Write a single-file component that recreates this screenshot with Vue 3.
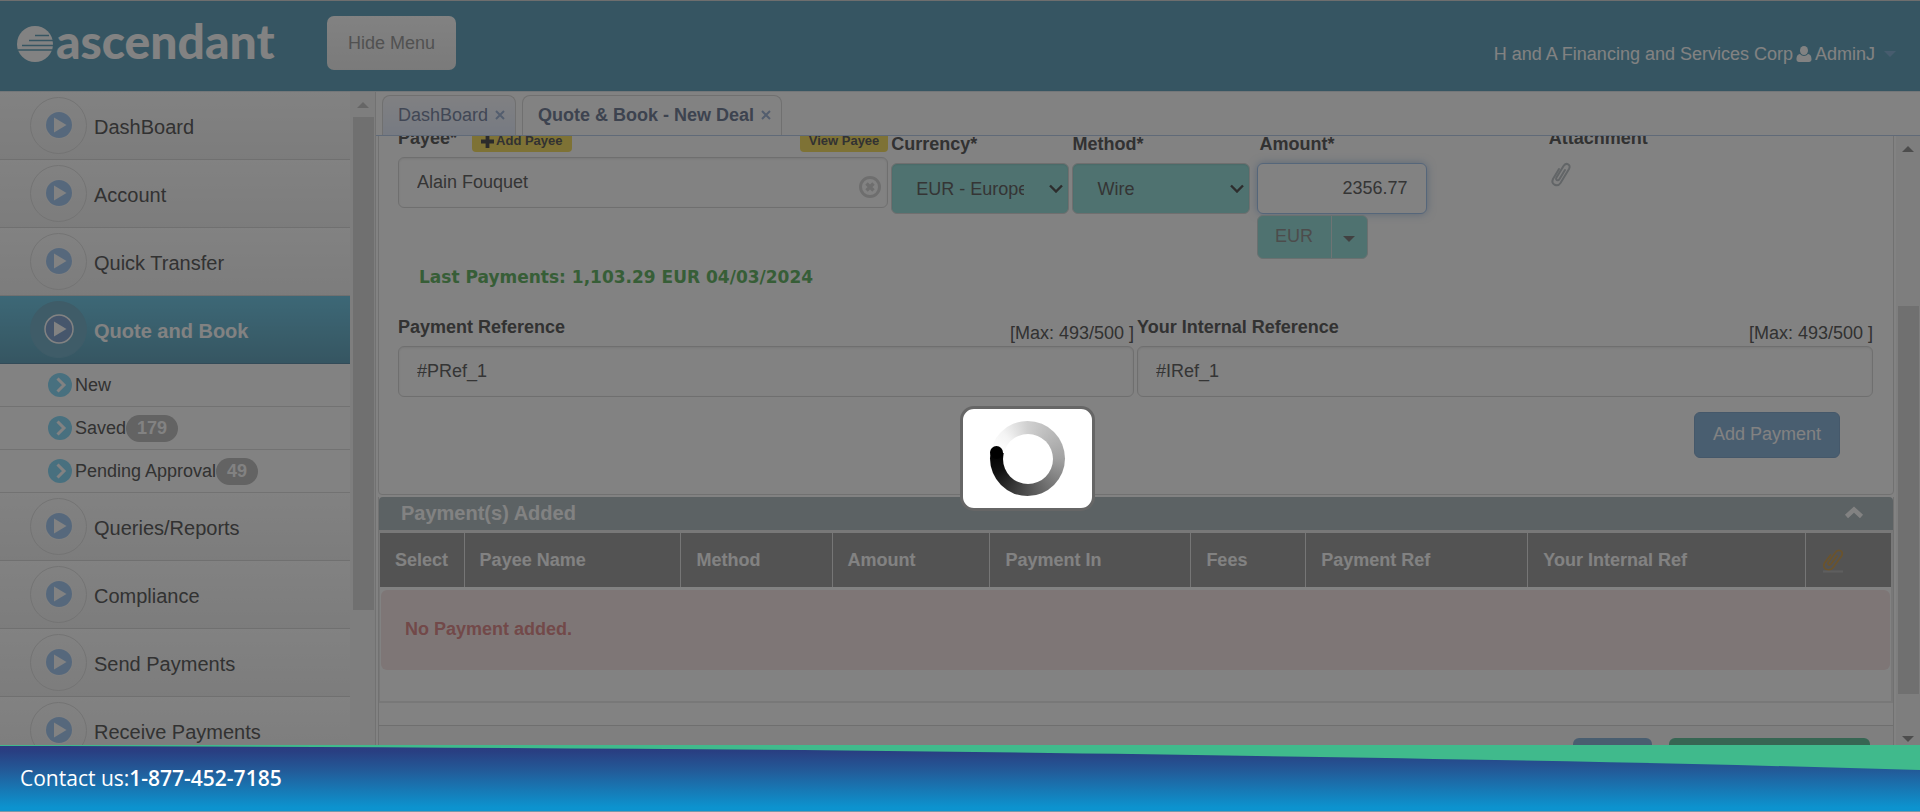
<script setup>
import { ref } from 'vue'

const topMenu = ['DashBoard', 'Account', 'Quick Transfer']
const subMenu = [
  { label: 'New' },
  { label: 'Saved', count: 179 },
  { label: 'Pending Approval', count: 49 },
]
const bottomMenu = ['Queries/Reports', 'Compliance', 'Send Payments', 'Receive Payments']
const columns = [
  { label: 'Select', width: 5.6 },
  { label: 'Payee Name', width: 14.35 },
  { label: 'Method', width: 10 },
  { label: 'Amount', width: 10.45 },
  { label: 'Payment In', width: 13.3 },
  { label: 'Fees', width: 7.6 },
  { label: 'Payment Ref', width: 14.7 },
  { label: 'Your Internal Ref', width: 18.4 },
]
const payee = ref('Alain Fouquet')
const amount = ref('2356.77')
const paymentRef = ref('#PRef_1')
const internalRef = ref('#IRef_1')
</script>

<template>
  <div class="page">
    <header class="header">
      <a class="logo" href="#" aria-label="ascendant">
        <svg class="globe" viewBox="0 0 36 36" aria-hidden="true">
          <circle cx="18" cy="18" r="18" fill="#fff" />
          <g stroke="#6aa8c0" stroke-width="1.6" fill="none">
            <path d="M18 9.500H32M12 14.500H36M5 19.500H36M1 24H35" />
          </g>
        </svg>
        <span>ascendant</span>
      </a>
      <button class="hide-menu" type="button">Hide Menu</button>
      <div class="user">
        <span>H and A Financing and Services Corp</span>
        <svg width="16" height="16" viewBox="0 0 16 16" aria-hidden="true">
          <ellipse cx="8" cy="4.500" rx="4" ry="4.500" fill="#fff" />
          <path d="M4 8C1 8.500 .5 11 .5 13.500 .5 15 1.500 16 3 16H13C14.500 16 15.500 15 15.500 13.500 15.500 11 15 8.500 12 8 10 10.500 6 10.500 4 8Z" fill="#fff" />
        </svg>
        <span>AdminJ</span>
        <i class="user-caret"></i>
      </div>
    </header>

    <div class="body">
      <aside class="side">
        <nav class="menu">
          <a v-for="m in topMenu" :key="m" class="item" href="#">
            <span class="ring">
              <svg viewBox="0 0 30 30"><circle cx="15" cy="15" r="14" fill="#fff" opacity=".5" /><circle cx="15" cy="15" r="13" fill="#aacdf4" /><path d="M10 7.500L22.500 15 10 22.500Z" fill="#fff" /></svg>
            </span>
            <span class="text">{{ m }}</span>
          </a>
          <a class="item active" href="#">
            <span class="ring">
              <svg viewBox="0 0 30 30"><circle cx="15" cy="15" r="14" fill="#8aaad4" stroke="#fff" stroke-width="1.500" /><path d="M10 7.500L22.500 15 10 22.500Z" fill="#fff" /></svg>
            </span>
            <span class="text">Quote and Book</span>
          </a>
          <a v-for="s in subMenu" :key="s.label" class="sub" href="#">
            <svg viewBox="0 0 24 24"><circle cx="12" cy="12" r="12" fill="#8edcfa" /><path d="M9.500 5.500L16 12 9.500 18.500" fill="none" stroke="#fff" stroke-width="3" /></svg>
            <span>{{ s.label }}</span>
            <span v-if="s.count" class="badge">{{ s.count }}</span>
          </a>
          <a v-for="m in bottomMenu" :key="m" class="item" href="#">
            <span class="ring">
              <svg viewBox="0 0 30 30"><circle cx="15" cy="15" r="14" fill="#fff" opacity=".5" /><circle cx="15" cy="15" r="13" fill="#aacdf4" /><path d="M10 7.500L22.500 15 10 22.500Z" fill="#fff" /></svg>
            </span>
            <span class="text">{{ m }}</span>
          </a>
        </nav>
        <div class="bar side-bar"><i class="up light"></i><i class="thumb"></i></div>
      </aside>

      <main class="main">
        <div class="tabs">
          <div class="tab"><a href="#">DashBoard</a><button type="button" aria-label="Close DashBoard"><svg viewBox="0 0 10 10"><path d="M1 1L9 9M9 1L1 9" /></svg></button></div>
          <div class="tab current"><a href="#">Quote &amp; Book - New Deal</a><button type="button" aria-label="Close Quote &amp; Book"><svg viewBox="0 0 10 10"><path d="M1 1L9 9M9 1L1 9" /></svg></button></div>
        </div>

        <div class="scroll">
          <div class="content">
            <section class="form">
              <div class="row">
                <div>
                  <div class="head">
                    <label for="payee">Payee*</label>
                    <button class="chip add" type="button"><svg viewBox="0 0 12 12"><path d="M6 0V12M0 6H12" stroke="#555" stroke-width="3.500" /></svg>Add Payee</button>
                    <button class="chip view" type="button">View Payee</button>
                  </div>
                  <div class="clearable">
                    <input id="payee" v-model="payee" class="field" type="text" />
                    <button class="clear" type="button" aria-label="Clear payee">
                      <svg viewBox="0 0 22 22"><circle cx="11" cy="11" r="9.500" fill="none" stroke="#d8d8d8" stroke-width="3" /><path d="M7.500 7.500L14.500 14.500M14.500 7.500L7.500 14.500" stroke="#d8d8d8" stroke-width="3.500" /></svg>
                    </button>
                  </div>
                </div>
                <div class="lower">
                  <label for="currency">Currency*</label>
                  <div class="pick">
                    <select id="currency" class="field"><option>EUR - Europe</option></select>
                    <svg viewBox="0 0 14 9" aria-hidden="true"><path d="M1 1.500L7 7.500 13 1.500" /></svg>
                  </div>
                </div>
                <div class="lower">
                  <label for="method">Method*</label>
                  <div class="pick">
                    <select id="method" class="field"><option>Wire</option></select>
                    <svg viewBox="0 0 14 9" aria-hidden="true"><path d="M1 1.500L7 7.500 13 1.500" /></svg>
                  </div>
                </div>
                <div class="lower">
                  <label class="inset" for="amount">Amount*</label>
                  <input id="amount" v-model="amount" class="field amount" type="text" />
                  <div class="split"><button type="button">EUR</button><button type="button" aria-label="Choose currency"><i></i></button></div>
                </div>
                <div>
                  <div class="head"><span class="caption">Attachment</span></div>
                  <button class="attach" type="button" aria-label="Attach file">
                    <svg viewBox="0 0 24 28"><g fill="none" stroke="#c0c6ca" stroke-width="2" stroke-linecap="round"><path d="M16 10L10.500 19C9 21.500 6 20 7.500 17.500L14.500 6C17 2 22.500 4.500 20 9L11.500 23C8.500 27.500 1.500 24.500 4 19L10 9" /></g></svg>
                  </button>
                </div>
              </div>

              <p class="last">Last Payments: 1,103.29 EUR 04/03/2024</p>

              <div class="refs">
                <div>
                  <div class="refhead"><label for="pref">Payment Reference</label><span>[Max: 493/500 ]</span></div>
                  <input id="pref" v-model="paymentRef" class="field" type="text" />
                </div>
                <div>
                  <div class="refhead"><label for="iref">Your Internal Reference</label><span>[Max: 493/500 ]</span></div>
                  <input id="iref" v-model="internalRef" class="field" type="text" />
                </div>
              </div>
              <div class="actions"><button class="primary" type="button">Add Payment</button></div>
            </section>

            <section class="added">
              <h2>
                Payment(s) Added
                <svg viewBox="0 0 20 13"><path d="M2.500 10.500L10 3.500 17.500 10.500" fill="none" stroke="#fff" stroke-width="4.500" /></svg>
              </h2>
              <div class="tablewrap">
                <table>
                  <colgroup>
                    <col v-for="c in columns" :key="c.label" :style="{ width: c.width + '%' }" />
                    <col />
                  </colgroup>
                  <thead>
                    <tr>
                      <th v-for="c in columns" :key="c.label">{{ c.label }}</th>
                      <th aria-label="Attachment">
                        <svg viewBox="0 0 24 26"><g fill="none" stroke="#d0a458" stroke-width="1.800" stroke-linecap="round"><path d="M16 9L10 17C8.500 19 6 17.500 7.500 15L14 6C17 1 23.500 4 20.500 9L12.500 20C8 26 .5 21.500 3.500 16L9.500 8" /></g><path d="M2 24.500H22" stroke="#b8b8b8" stroke-width="2" /></svg>
                      </th>
                    </tr>
                  </thead>
                </table>
                <div class="alert">No Payment added.</div>
              </div>
              <div class="spacer"></div>
              <div class="foot"><button class="blue" type="button" aria-label="Back"></button><button class="green" type="button" aria-label="Submit"></button></div>
            </section>
          </div>
          <div class="bar main-bar"><i class="up"></i><i class="thumb"></i><i class="down"></i></div>
        </div>
      </main>
    </div>

    <footer class="footer">
      <svg viewBox="0 0 1920 67" preserveAspectRatio="none" aria-hidden="true">
        <path d="M0 0H1920V25.500C1650 17 1350 12 930 6.500 600 3 300 1.500 0 1Z" fill="#40ba8c" />
      </svg>
      <p>Contact us:<strong>1-877-452-7185</strong></p>
    </footer>

    <div class="overlay"></div>
    <div class="loading" role="status" aria-label="Loading"><div class="spinner"><i></i></div></div>
  </div>
</template>

<style>
body { margin: 0; overflow: hidden; }
</style>

<style scoped>
* { box-sizing: border-box; }
.page {
  position: relative;
  display: flex;
  flex-direction: column;
  height: 100vh;
  overflow: hidden;
  background: #fff;
  color: #626262;
  font: 18px/24px "Liberation Sans", Arial, sans-serif;
}
a { color: inherit; text-decoration: none; }
button { font: inherit; color: inherit; border: 0; padding: 0; background: none; }

.header {
  flex: none;
  display: flex;
  align-items: flex-start;
  height: 92px;
  padding: 15px 24px 0 17px;
  background: #6aa8c0;
  border-top: 1px solid #d8d8d8;
  border-bottom: 1px solid #e4eaee;
}
.logo { display: flex; align-items: center; gap: 3px; width: 310px; height: 56px; color: #fff; font: 900 48px/52px Lato, sans-serif; }
.logo span { margin-top: -6px; }
.globe { flex: none; width: 36px; height: 36px; }
.hide-menu {
  width: 129px;
  height: 54px;
  border-radius: 7px;
  background: linear-gradient(#fff, #f0f0f0);
  color: #a0a0a0;
}
.user { display: flex; align-items: center; gap: 3px; margin: 26px 0 0 auto; color: #fff; }
.user-caret { margin-left: 6px; border: 6px solid transparent; border-top-color: #8cb4d8; border-bottom: 0; }

.body { flex: 1; min-height: 0; display: flex; }
.side { flex: none; display: flex; gap: 1px; width: 376px; border-right: 1px solid #e0e0e0; background: #f8f8f8; overflow: hidden; }
.menu { flex: 1; overflow: hidden; }
.item {
  display: flex;
  align-items: center;
  gap: 7px;
  height: 68px;
  padding-left: 30px;
  border-bottom: 1px solid #dcdcdc;
  background: linear-gradient(#fff, #f4f4f4);
  font-size: 20px;
}
.text { padding-top: 2px; }
.ring { display: grid; place-items: center; width: 57px; height: 57px; border: 1px solid #e2e2e2; border-radius: 50%; }
.ring svg { width: 30px; height: 30px; margin-top: -2px; }
.active { background: linear-gradient(#78cce8, #6aa8c0); border-color: #6494ac; color: #fff; font-weight: bold; }
.active .ring { background: #7cb4cc; border-color: #7cb4cc; }
.sub { display: flex; align-items: center; height: 43px; padding-left: 48px; border-bottom: 1px solid #e0e0e0; background: #fff; }
.sub svg { width: 24px; height: 24px; margin-right: 3px; }
.badge { padding: 0 11px; border-radius: 14px; background: #c2c2c2; color: #fff; font-weight: bold; line-height: 27px; }

.bar { position: relative; flex: none; width: 24px; background: #f8f8f8; display: flex; flex-direction: column; align-items: center; }
.bar .thumb { width: 21px; background: #dcdcdc; }
.up { border: 6px solid transparent; border-top: 0; border-bottom-color: #989898; }
.up.light { border-bottom-color: #c8c8c8; }
.down { border: 6px solid transparent; border-bottom: 0; border-top-color: #989898; }
.side-bar { padding: 10px 0 135px; gap: 9px; }
.side-bar .thumb { flex: 1; }
.main-bar { padding: 10px 0 3px; }
.main-bar .thumb { flex: 1; margin: 154px 0 42px; }

.main { flex: 1; min-width: 0; display: flex; flex-direction: column; }
.tabs { flex: none; display: flex; gap: 6px; height: 44px; padding: 3px 6px 0; border-bottom: 1px solid #bcd0ec; }
.tab {
  display: flex;
  align-items: center;
  gap: 7px;
  padding: 0 10px 1px 15px;
  border: 1px solid #dcdcdc;
  border-bottom: 0;
  border-radius: 8px 8px 0 0;
  background: linear-gradient(#fcfcff, #e8f0ff);
  color: #808ca8;
}
.tab.current { background: #fff; font-weight: bold; color: #78849c; }
.tab button { display: flex; }
.tab svg { width: 10px; height: 10px; fill: none; stroke: #a4b8d8; stroke-width: 2; }

.scroll { flex: 1; min-height: 0; display: flex; overflow: hidden; }
.content { flex: 1; min-width: 0; margin: -10px 2px 0; }
.form { border: 1px solid #dedede; border-radius: 4px; padding: 0 20px 36px 19px; margin-top: -1px; }
.row { display: grid; grid-template-columns: 490fr 178fr 181fr 289fr 324fr; gap: 3px; }
.row > div { min-width: 0; }
label, .caption { display: block; font-weight: bold; line-height: 24px; }
.lower { padding-top: 6px; }
.lower label { margin-bottom: 7px; }
.inset { padding-left: 3px; }
.head { display: flex; align-items: flex-start; height: 31px; }
.chip { display: flex; align-items: center; height: 22px; margin-top: 4px; padding: 0 9px; border-radius: 4px; background: #f8e068; font-size: 13px; font-weight: bold; }
.chip svg { width: 13px; height: 13px; margin-right: 2px; }
.add { margin-left: 15px; }
.view { margin-left: auto; }
.clearable { position: relative; }
.clear { position: absolute; right: 7px; top: 19px; display: flex; }
.clear svg { width: 22px; height: 22px; }
.field {
  display: block;
  width: 100%;
  height: 51px;
  margin: 0;
  padding: 0 18px;
  border: 1px solid #dadada;
  border-radius: 6px;
  background: #fff;
  box-shadow: inset 0 1px 2px rgba(0, 0, 0, .08);
  color: #686868;
  font: inherit;
  outline: 0;
}
.pick { position: relative; max-width: 178px; }
.pick select { appearance: none; padding: 0 44px 0 24px; background-color: #9ce0dc; }
.pick svg { position: absolute; right: 6px; top: 21px; width: 14px; height: 9px; fill: none; stroke: #585858; stroke-width: 2.4; pointer-events: none; }
.amount { width: 170px; text-align: right; border-color: #a8c8f0; box-shadow: 0 0 8px rgba(102, 150, 210, .5); }
.split { display: flex; width: 111px; height: 44px; margin-top: 1px; border: 1px solid #d0dcdc; border-radius: 6px; background: #9ce0dc; color: #969696; }
.split button { flex: 1; display: grid; place-items: center; padding-bottom: 2px; }
.split button:first-child { flex: none; width: 74px; border-right: 1px solid #d8e4e4; }
.split i { margin-top: 6px; border: 6px solid transparent; border-top-color: #808080; border-bottom: 0; }
.attach { display: flex; margin-top: 3px; }
.attach svg { width: 24px; height: 28px; }
.last { margin: 6px 0 26px 21px; color: #6cb86c; font: bold 17px/24px "DejaVu Sans", Verdana, sans-serif; }
.refs { display: grid; grid-template-columns: 1fr 1fr; gap: 3px; }
.refhead { display: flex; justify-content: space-between; height: 31px; }
.refhead span { margin-top: 6px; }
.actions { display: flex; justify-content: flex-end; padding: 15px 33px 0; }
.primary { width: 146px; height: 46px; padding-bottom: 2px; border: 1px solid #88acd0; border-radius: 6px; background: #90b8dc; color: #fff; }

.added { margin-top: 2px; border: solid #dedede; border-width: 0 1px; }
h2 {
  display: flex;
  align-items: center;
  justify-content: space-between;
  height: 33px;
  margin: 0;
  padding: 0 29px 2px 22px;
  border-radius: 4px 4px 0 0;
  background: #b4c0c4;
  color: #fff;
  font-size: 20px;
}
h2 svg { width: 20px; height: 13px; }
.tablewrap { border: solid #ebebeb; border-width: 3px 2px 2px 1px; padding-bottom: 31px; }
table { width: 100%; border-collapse: separate; border-spacing: 0; table-layout: fixed; }
th { height: 54px; padding: 0 0 0 15px; border-right: 1px solid #e8e8e8; background: #a4a4a4; color: #fff; text-align: left; white-space: nowrap; }
th:last-child { border-right: 0; }
th svg { display: block; width: 24px; height: 26px; }
.alert { margin: 3px 1px 0; padding: 27px 24px 29px; border-radius: 6px; background: #f8e8e8; color: #e09090; font-weight: bold; }
.spacer { height: 23px; border-bottom: 1px solid #dadada; }
.foot { display: flex; justify-content: flex-end; gap: 17px; height: 60px; padding: 12px 23px; background: #fafafa; }
.foot button { height: 40px; border-radius: 6px; }
.blue { width: 79px; background: #90b8dc; }
.green { width: 201px; background: #6cc8a4; }

.footer {
  position: relative;
  z-index: 2;
  flex: none;
  height: 67px;
  border-bottom: 1px solid #7898a8;
  background: linear-gradient(#2c3a80 0, #293f82 10%, #235a98 38%, #1779b5 68%, #0c93cf 95%);
  color: #fff;
}
.footer svg { position: absolute; inset: 0; width: 100%; height: 100%; }
.footer p { position: relative; margin: 0; padding: 19px 20px 0; font: 21px/28px "Open Sans", "Noto Sans", sans-serif; }
.footer strong { font-weight: 600; }

.overlay { position: absolute; inset: 0; z-index: 1; background: rgba(0, 0, 0, .49); }
.loading {
  position: absolute;
  z-index: 3;
  left: 50%;
  top: 50%;
  display: grid;
  place-items: center;
  width: 135px;
  height: 105px;
  border: 3px solid #666;
  border-radius: 14px;
  background: #fff;
}
.spinner {
  position: relative;
  display: grid;
  place-items: center;
  width: 75px;
  height: 75px;
  border-radius: 50%;
  background: conic-gradient(from 282deg, #fff, #f4f4f4 35deg, #d0d0d0 78deg, #a2a2a2 168deg, #505050 258deg, #101010 325deg, #000 360deg);
}
.spinner::before { content: ""; width: 50px; height: 50px; border-radius: 50%; background: #fff; }
.spinner i { position: absolute; left: 0; top: 25px; width: 13px; height: 13px; border-radius: 50%; background: #000; }
</style>
